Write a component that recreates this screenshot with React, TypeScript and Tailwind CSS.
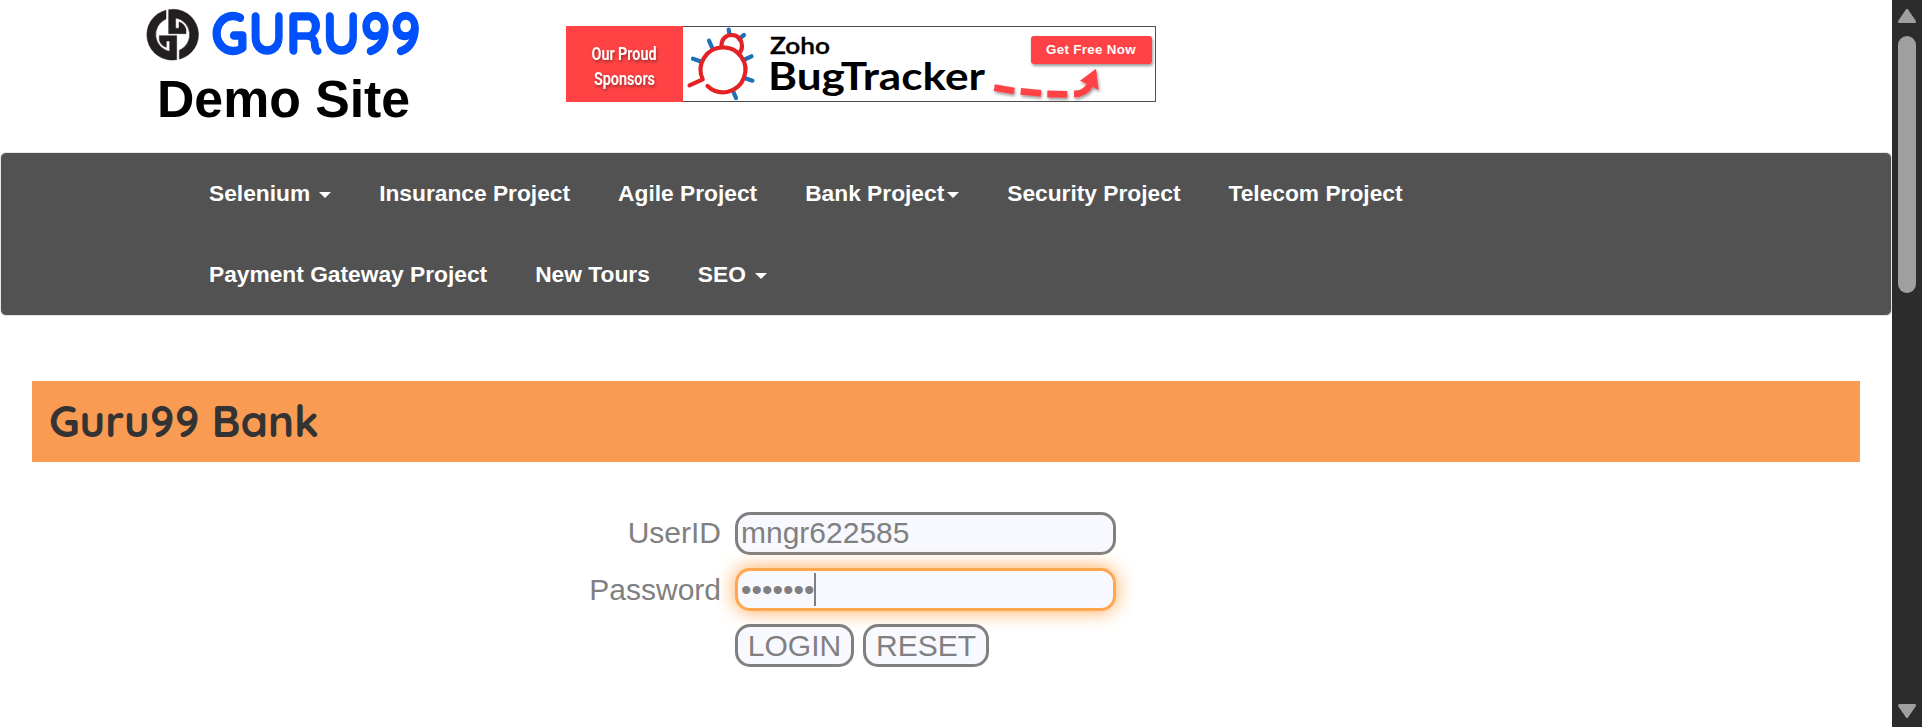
import React from "react";

const halfMark =
  "M66 12.5A76 76 0 0 0 98 161V89H46V102C48 112 56 121 67 124V105H77V136A51 51 0 0 1 66 39Z";

function Guru99Logo() {
  return (
    <svg width="290" height="66" viewBox="0 0 290 66" className="block" aria-label="Guru99">
      <g transform="translate(4 6) scale(0.33333)" fill="#231f20" stroke="#231f20" strokeWidth="1.5">
        <path d={halfMark} />
        <path d={halfMark} transform="rotate(180 86 86)" />
      </g>
      <text x="71" y="54" fontFamily="Quicksand" fontWeight="700" fontSize="58" fill="#0050fb" stroke="#0050fb" strokeWidth="1.4" textLength="210" lengthAdjust="spacingAndGlyphs">
        GURU99
      </text>
    </svg>
  );
}

function SponsorBanner() {
  return (
    <svg width="590" height="76" viewBox="0 0 590 76" className="block">
      <defs>
        <filter id="soft" x="-20%" y="-40%" width="140%" height="200%">
          <feDropShadow dx="1" dy="2" stdDeviation="1.5" floodColor="#000" floodOpacity="0.4" />
        </filter>
      </defs>
      <rect x="0.5" y="0.5" width="589" height="75" fill="#fff" stroke="#4d4d4d" />
      <rect width="117" height="76" fill="#ff4344" />
      <g fontFamily="Roboto" fontWeight="600" fontSize="18.5" fill="#fff" filter="url(#soft)">
        <text x="25.5" y="34" textLength="65" lengthAdjust="spacingAndGlyphs">Our Proud</text>
        <text x="28" y="58.5" textLength="61" lengthAdjust="spacingAndGlyphs">Sponsors</text>
      </g>
      <g stroke="#1c71b9" strokeWidth="4.2" strokeLinecap="round">
        <path d="M162.7 3.5L163.5 9M178 9L173 13M143 14.7L146.5 22.5M127 32.7L135 35.5M185.5 30.3L177.5 34M186.5 54.7L178.5 52M170 72L167 65" />
      </g>
      <g fill="none" stroke="#e32225" strokeWidth="4.2" strokeLinecap="round" strokeLinejoin="round">
        <path d="M141.5 60A22.4 22.4 0 1 0 136.7 53.3L123.5 59.3" />
        <path d="M155.5 21C155 13 160 9 165.7 9C173 9 176 15 176 20C176 24 174.5 26 173 27.5" />
      </g>
      <text x="204" y="28.3" fontFamily="Lato" fontWeight="600" fontSize="23.5" stroke="#000" strokeWidth="0.4" textLength="60" lengthAdjust="spacingAndGlyphs">Zoho</text>
      <text x="202" y="64" fontFamily="Lato" fontWeight="700" fontSize="38.5" textLength="217" lengthAdjust="spacingAndGlyphs">BugTracker</text>
      <g filter="url(#soft)">
        <rect x="465" y="10" width="121" height="28" rx="3" fill="#ff4344" />
      </g>
      <text x="480" y="27.8" fontFamily="Liberation Sans" fontWeight="700" fontSize="13.3" fill="#fff" textLength="89.5">Get Free Now</text>
      <g filter="url(#soft)" fill="none" stroke="#ff4344" strokeWidth="6.8">
        <path d="M428.3 61.7L448.3 65M454.7 65.3L475 67.3M481.3 68L501.3 68.3M508 68C516 68 521 65 524.7 58" />
        <path d="M530 42.7L514 54.7L532.7 64Z" fill="#ff4344" stroke="none" />
      </g>
    </svg>
  );
}

type NavEntry = { label: string; caret?: boolean; tight?: boolean };

const rows: NavEntry[][] = [
  [
    { label: "Selenium", caret: true },
    { label: "Insurance Project" },
    { label: "Agile Project" },
    { label: "Bank Project", caret: true, tight: true },
    { label: "Security Project" },
    { label: "Telecom Project" },
  ],
  [{ label: "Payment Gateway Project" }, { label: "New Tours" }, { label: "SEO", caret: true }],
];

function NavItem({ label, caret, tight }: NavEntry) {
  return (
    <a className="flex items-center whitespace-nowrap">
      {label}
      {caret && (
        <span
          className={
            tight
              ? "ml-[3px] mt-[3px] border-x-[6px] border-t-[6px] border-x-transparent border-t-white"
              : "ml-[9px] mt-[3px] border-x-[6px] border-t-[6px] border-x-transparent border-t-white"
          }
        />
      )}
    </a>
  );
}

function Scrollbar() {
  return (
    <div className="flex h-full w-[30px] shrink-0 flex-col items-center justify-between bg-[#2c2c2c] pt-[9px] pb-[9px]">
      <div className="flex flex-col items-center gap-[13px]">
        <svg width="18" height="14" viewBox="0 0 18 14" className="block">
          <path d="M9 1.5L16.5 12.5H1.5Z" fill="#9f9f9f" stroke="#9f9f9f" strokeWidth="3" strokeLinejoin="round" />
        </svg>
        <div className="h-[257px] w-[18px] rounded-full bg-[#9f9f9f]" />
      </div>
      <svg width="18" height="14" viewBox="0 0 18 14" className="block">
        <path d="M9 12.5L16.5 1.5H1.5Z" fill="#9f9f9f" stroke="#9f9f9f" strokeWidth="3" strokeLinejoin="round" />
      </svg>
    </div>
  );
}

export default function App() {
  return (
    <div className="flex h-[727px] w-[1922px] overflow-hidden bg-white font-['Liberation_Sans',Arial,sans-serif]">
      <main className="flex min-w-0 flex-1 flex-col">
        <header className="flex h-[152px] items-start pl-[140px]">
          <div className="flex w-[426px] flex-col">
            <Guru99Logo />
            <h2 className="pl-[17px] text-[51.75px] leading-[66px] font-bold text-black">Demo Site</h2>
          </div>
          <div className="pt-[26px]">
            <SponsorBanner />
          </div>
        </header>

        <nav className="flex h-[164px] flex-col rounded-[6px] border border-[#e7e7e7] bg-[#525252] pl-[208px] text-[22.75px] font-bold text-white">
          {rows.map((row, i) => (
            <div key={i} className="flex h-[81px] items-center gap-[48px] pb-px">
              {row.map((item) => (
                <NavItem key={item.label} {...item} />
              ))}
            </div>
          ))}
        </nav>

        <div className="mt-[65px] mr-8 ml-8 flex h-[81px] items-center bg-[#f99b52] pb-px pl-[17px]">
          <h2 className="font-['Quicksand','Lato',sans-serif] text-[43.75px] leading-[48px] font-bold text-[#333]">Guru99 Bank</h2>
        </div>

        <form className="mt-[50px] grid grid-cols-[721px_auto] gap-x-[14px] gap-y-[13px] text-[30px] leading-[34px] text-[#808080]">
          <label className="flex h-[43px] items-center justify-end pb-[2px]">UserID</label>
          <div className="flex h-[43px] w-[381px] items-center rounded-[15px] border-[3px] border-[#808080] bg-[#f8f8ff] pb-[2px] pl-[3px]">mngr622585</div>
          <label className="flex h-[43px] items-center justify-end">Password</label>
          <div className="flex h-[43px] w-[381px] items-center rounded-[15px] border-[3px] border-[#ffa64f] bg-[#f8f8ff] pl-[3px] shadow-[0_0_19px_#ffa64f]">
            <span>•••••••</span>
            <span className="-ml-px h-[33px] w-[2px] bg-[#808080]" />
          </div>
          <span />
          <div className="flex gap-[9px]">
            <button type="button" className="flex h-[43px] w-[119px] items-center justify-center rounded-[15px] border-[3px] border-[#808080] bg-[#f8f8ff]">LOGIN</button>
            <button type="button" className="flex h-[43px] w-[126px] items-center justify-center rounded-[15px] border-[3px] border-[#808080] bg-[#f8f8ff]">RESET</button>
          </div>
        </form>
      </main>
      <Scrollbar />
    </div>
  );
}
